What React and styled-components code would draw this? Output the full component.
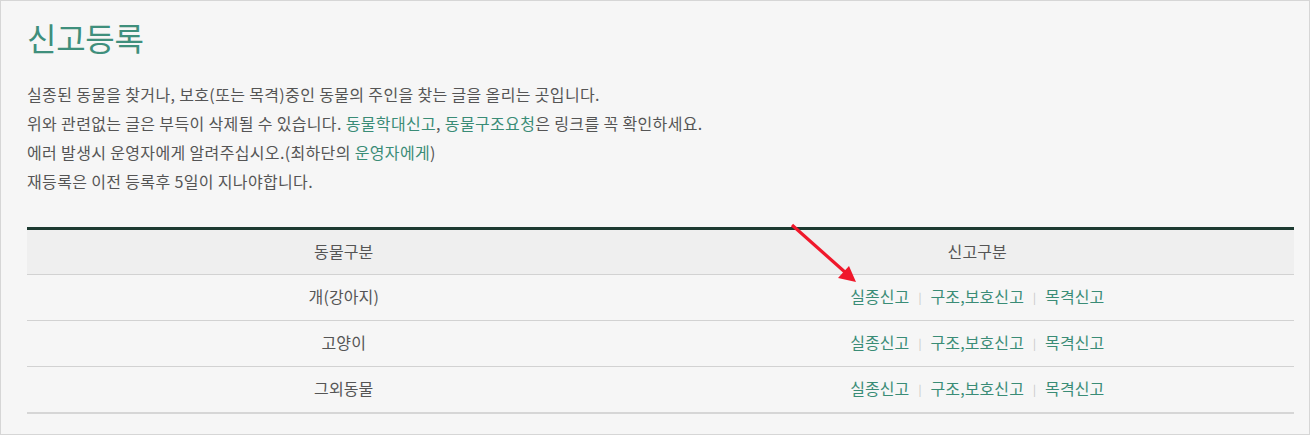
import React from 'react';
import styled, { createGlobalStyle } from 'styled-components';

const GlobalStyle = createGlobalStyle`
    html, body {
        margin: 0;
        padding: 0;
        background: #fff;
    }
    body {
        font-family: "Noto Sans CJK KR", "Noto Sans", sans-serif;
    }
`;

const rows = [
    { name: '개(강아지)' },
    { name: '고양이' },
    { name: '그외동물' },
];

const reportTypes = ['실종신고', '구조,보호신고', '목격신고'];

function App() {
    return (
        <>
            <GlobalStyle />
            <MainContainer>
                <Title>신고등록</Title>
                <Notice>
                    <p>실종된 동물을 찾거나, 보호(또는 목격)중인 동물의 주인을 찾는 글을 올리는 곳입니다.</p>
                    <p>
                        위와 관련없는 글은 부득이 삭제될 수 있습니다. <GreenLink href="#">동물학대신고</GreenLink>,{' '}
                        <GreenLink href="#">동물구조요청</GreenLink>은 링크를 꼭 확인하세요.
                    </p>
                    <p>
                        에러 발생시 운영자에게 알려주십시오.(최하단의 <GreenLink href="#">운영자에게</GreenLink>)
                    </p>
                    <p>재등록은 이전 등록후 5일이 지나야합니다.</p>
                </Notice>
                <TableWrap>
                    <Table>
                        <thead>
                            <tr>
                                <Th>동물구분</Th>
                                <Th>신고구분</Th>
                            </tr>
                        </thead>
                        <tbody>
                            {rows.map((row, i) => (
                                <Tr key={row.name} $last={i === rows.length - 1}>
                                    <Td>{row.name}</Td>
                                    <Td>
                                        {reportTypes.map((t, j) => (
                                            <React.Fragment key={t}>
                                                {j > 0 && <Bar>|</Bar>}
                                                <GreenLink href="#">{t}</GreenLink>
                                            </React.Fragment>
                                        ))}
                                    </Td>
                                </Tr>
                            ))}
                        </tbody>
                    </Table>
                    <Arrow width="80" height="70" viewBox="0 0 80 70">
                        <line x1="6" y1="4" x2="60" y2="52" stroke="#f0182b" strokeWidth="3.2" />
                        <polygon points="70,61 52,57 63,45" fill="#f0182b" />
                    </Arrow>
                </TableWrap>
            </MainContainer>
        </>
    );
}

export default App;

const MainContainer = styled.div`
    box-sizing: border-box;
    width: 1310px;
    height: 435px;
    border: 1px solid #d6d6d6;
    background-color: #f6f6f6;
    padding: 11px 15px 0 26px;
    color: #555;
`;

const Title = styled.h2`
    margin: 0;
    font-size: 32px;
    font-weight: 400;
    line-height: 50px;
    color: #3f8f7c;
    letter-spacing: -0.3px;
`;

const Notice = styled.div`
    margin-top: 18px;
    font-size: 16px;
    line-height: 29px;
    letter-spacing: 0.35px;

    p {
        margin: 0;
    }
`;

const GreenLink = styled.a`
    color: #3a8c76;
    text-decoration: none;
`;

const TableWrap = styled.div`
    position: relative;
    margin-top: 31px;
`;

const Table = styled.table`
    width: 100%;
    border-collapse: collapse;
    border-top: 3px solid #1d3a31;
    font-size: 16px;
    letter-spacing: 0.1px;
`;

const Th = styled.th`
    width: 50%;
    height: 41px;
    padding: 0 0 3px;
    font-weight: 400;
    color: #555;
    background-color: #efefef;
    border-bottom: 1px solid #d2d2d2;
`;

const Tr = styled.tr`
    border-bottom: ${(p) => (p.$last ? '2px solid #d6d6d6' : '1px solid #d2d2d2')};
`;

const Td = styled.td`
    height: 41px;
    padding: 0 0 4px;
    text-align: center;
    color: #555;
`;

const Bar = styled.span`
    display: inline-block;
    margin: 0 9px;
    font-size: 11px;
    color: #c4c4c4;
    vertical-align: 1px;
`;

const Arrow = styled.svg`
    position: absolute;
    left: 759px;
    top: -6px;
    pointer-events: none;
`;
